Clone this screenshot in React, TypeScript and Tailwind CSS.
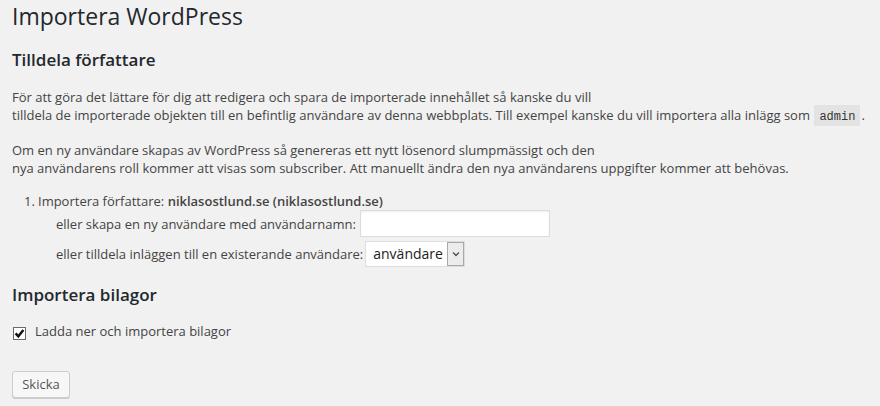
import React, { useState } from "react";

export default function App() {
  const [username, setUsername] = useState("");
  const [attachments, setAttachments] = useState(true);

  return (
    <div className="w-full h-[406px] bg-[#f1f1f1] px-[12px] pt-[2px] font-['Open_Sans',sans-serif] text-[13px] leading-[18px] text-[#444] overflow-hidden">
      <h1 className="text-[23px] leading-[29px] font-normal text-[#23282d]">
        Importera WordPress
      </h1>

      <h2 className="mt-[18px] text-[17px] leading-[22px] font-semibold text-[#23282d]">
        Tilldela författare
      </h2>

      <p className="mt-[17px]">
        För att göra det lättare för dig att redigera och spara de importerade innehållet så kanske du vill
        <br />
        tilldela de importerade objekten till en befintlig användare av denna webbplats. Till exempel kanske du vill
        importera alla inlägg som{" "}
        <code className="mx-[1px] bg-[#e3e3e3] px-[5px] pt-[5px] pb-[2px] font-['Liberation_Mono',monospace] text-[12px] text-[#333]">
          admin
        </code>
        .
      </p>

      <p className="mt-[15px]">
        Om en ny användare skapas av WordPress så genereras ett nytt lösenord slumpmässigt och den
        <br />
        nya användarens roll kommer att visas som subscriber. Att manuellt ändra den nya användarens uppgifter kommer
        att behövas.
      </p>

      <div className="mt-[15px]">
        <div className="flex pl-[12px]">
          <span className="w-[14px]">1.</span>
          <span>
            Importera författare:{" "}
            <strong className="font-semibold">niklasostlund.se (niklasostlund.se)</strong>
          </span>
        </div>

        <div className="ml-[44px] flex items-center gap-[4px] h-[27px]">
          <span>eller skapa en ny användare med användarnamn:</span>
          <input
            type="text"
            value={username}
            onChange={(e) => setUsername(e.target.value)}
            className="w-[190px] h-[27px] bg-white border border-[#ddd] shadow-[inset_0_1px_2px_rgba(0,0,0,0.07)] outline-none px-[5px]"
          />
        </div>

        <div className="ml-[44px] mt-[4px] flex items-center gap-[2px] h-[26px]">
          <span>eller tilldela inläggen till en existerande användare:</span>
          <div className="flex h-[26px] w-[100px] bg-white border border-[#ddd]">
            <span className="flex-1 pl-[7px] text-[14px] leading-[24px] text-[#222]">användare</span>
            <span className="flex w-[17px] items-center justify-center border border-[#a9a9a9] bg-[#ececec]">
              <svg width="8" height="6" viewBox="0 0 8 6">
                <path d="M1 1.5 L4 4.5 L7 1.5" fill="none" stroke="#555" strokeWidth="1.4" />
              </svg>
            </span>
          </div>
        </div>
      </div>

      <h2 className="mt-[17px] text-[17px] leading-[22px] font-semibold text-[#23282d]">
        Importera bilagor
      </h2>

      <label className="mt-[16px] flex items-start cursor-pointer">
        <span
          onClick={() => setAttachments(!attachments)}
          className="mt-[5px] ml-[1px] flex h-[13px] w-[13px] items-center justify-center border border-[#6a6a6a] bg-white"
        >
          {attachments && (
            <svg width="11" height="11" viewBox="0 0 11 11">
              <path d="M1.6 5.4 L4.3 8.3 L9.4 2" fill="none" stroke="#111" strokeWidth="2.4" />
            </svg>
          )}
        </span>
        <span className="ml-[9px]">Ladda ner och importera bilagor</span>
      </label>

      <button className="mt-[31px] flex h-[27px] w-[58px] items-center justify-center rounded-[3px] border border-[#ccc] bg-[#f7f7f7] shadow-[0_1px_0_#ccc] text-[13px] leading-[25px] text-[#555]">
        Skicka
      </button>
    </div>
  );
}
